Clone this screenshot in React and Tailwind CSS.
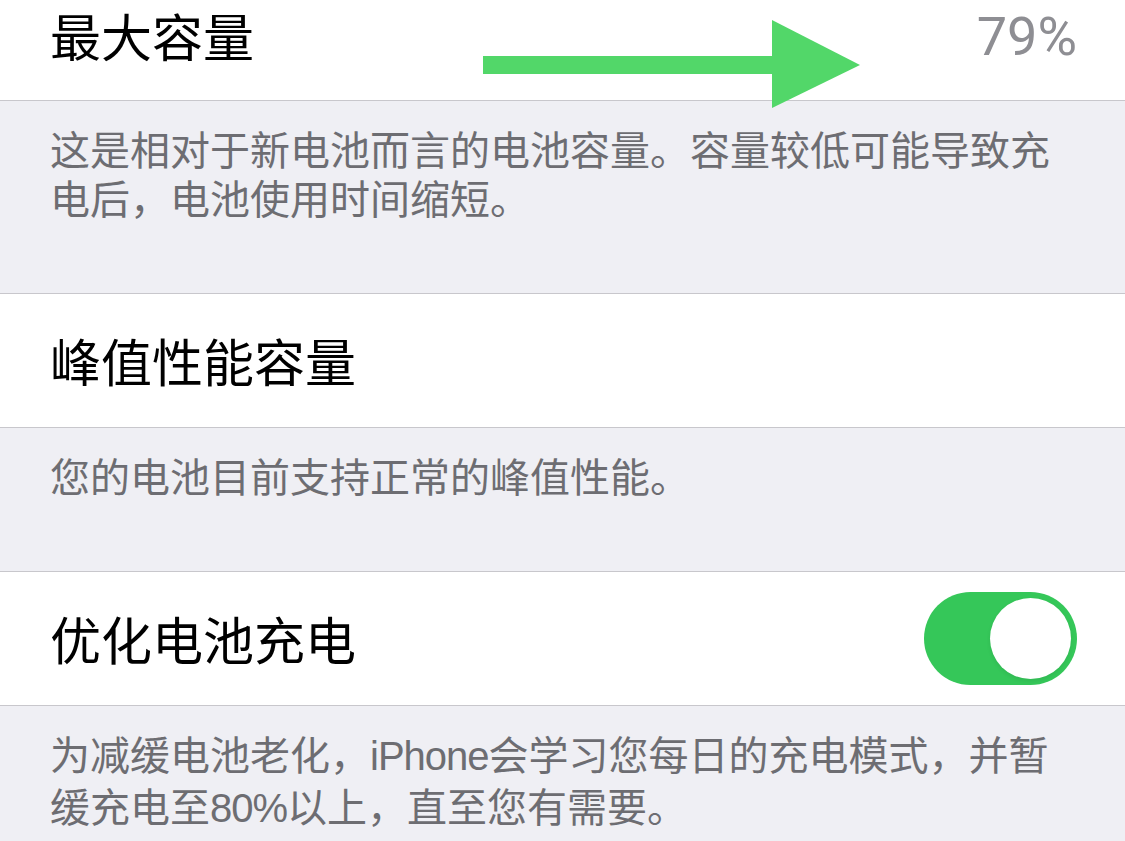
import React from 'react';

const cjk = "font-['Noto_Sans_CJK_SC','Noto_Sans',sans-serif]";
const latin = "font-['Liberation_Sans','Noto_Sans_CJK_SC',sans-serif]";

const Toggle = ({ on }) => (
    <div className={`w-[153px] h-[93px] rounded-full p-[6px] flex ${on ? 'bg-[#35c759] justify-end' : 'bg-[#e5e5ea] justify-start'}`}>
        <div className="w-[81px] h-[81px] rounded-full bg-white shadow-[0_2px_4px_rgba(0,0,0,0.08)]" />
    </div>
);

const Row = ({ title, children, className = '' }) => (
    <div className={`bg-white flex items-center justify-between pl-[50px] pr-[48px] border-b border-[#c8c7cc] ${className}`}>
        <span className={`text-[51px] leading-none text-black ${cjk}`}>{title}</span>
        {children}
    </div>
);

const Footer = ({ lines, className = '' }) => (
    <div className={`bg-[#efeff4] px-[50px] pt-[23px] border-b border-[#c8c7cc] text-[40px] leading-[49px] text-[#6d6d72] ${cjk} ${className}`}>
        {lines.map((line, i) => (
            <div key={i} className="whitespace-nowrap">{line}</div>
        ))}
    </div>
);

export default function App() {
    return (
        <div className="relative w-[1125px] h-[841px] overflow-hidden bg-[#efeff4]">
            <div className="-mt-[30px]">
                <Row title="最大容量" className="h-[131px]">
                    <span className="text-[54px] leading-none text-[#8e8e93] font-['Roboto',sans-serif] mt-[4px]">79%</span>
                </Row>
                <Footer
                    className="h-[193px]"
                    lines={['这是相对于新电池而言的电池容量。容量较低可能导致充', '电后，电池使用时间缩短。']}
                />
                <Row title="峰值性能容量" className="h-[134px]" />
                <Footer className="h-[144px]" lines={['您的电池目前支持正常的峰值性能。']} />
                <Row title="优化电池充电" className="h-[134px]">
                    <Toggle on />
                </Row>
                <Footer
                    className="h-[200px] border-b-0"
                    lines={[
                        <>为减缓电池老化，<span className={`${latin} tracking-[-1px]`}>iPhone</span>会学习您每日的充电模式，并暂</>,
                        <>缓充电至<span className={`${latin} tracking-[-1px]`}>80%</span>以上，直至您有需要。</>,
                    ]}
                />
            </div>

            {/* annotation arrow drawn over the screenshot */}
            <svg className="absolute left-[483px] top-[20px]" width="377" height="88" viewBox="0 0 377 88">
                <rect x="0" y="36" width="292" height="18" fill="#52d769" />
                <polygon points="289,0 377,45 289,88" fill="#52d769" />
            </svg>
        </div>
    );
}
